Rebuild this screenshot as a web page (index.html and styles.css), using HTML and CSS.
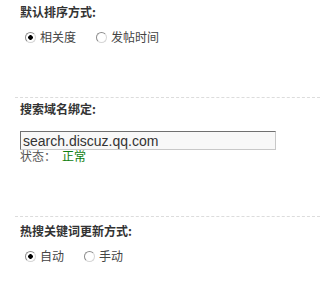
FILE: index.html
```html
<!DOCTYPE html>
<html lang="zh-CN">
<head>
<meta charset="utf-8">
<title>搜索设置</title>
<link rel="stylesheet" href="styles.css">
</head>
<body>
<div class="panel">
  <div class="section section-first">
    <h3 class="title">默认排序方式:</h3>
    <div class="options">
      <label class="opt"><input type="radio" class="radio" name="order" checked><span>相关度</span></label>
      <label class="opt"><input type="radio" class="radio" name="order"><span>发帖时间</span></label>
    </div>
  </div>
  <div class="section section-domain">
    <h3 class="title">搜索域名绑定:</h3>
    <input type="text" class="domain" value="search.discuz.qq.com">
    <div class="status">状态：<span class="ok">正常</span></div>
  </div>
  <div class="section section-last">
    <h3 class="title">热搜关键词更新方式:</h3>
    <div class="options">
      <label class="opt"><input type="radio" class="radio" name="upd" checked><span>自动</span></label>
      <label class="opt"><input type="radio" class="radio" name="upd"><span>手动</span></label>
    </div>
  </div>
</div>
</body>
</html>
```
FILE: styles.css
```css
html, body {
  margin: 0;
  padding: 0;
  background: #fff;
}
body {
  font-family: "Noto Sans CJK SC", "Noto Sans", sans-serif;
  font-size: 12px;
  color: #444;
}
.panel {
  padding-left: 15px;
}
.section {
  border-top: 1px dashed #dcdcdc;
}
.section-first {
  border-top: none;
  padding: 3px 0 51px;
}
.section-domain {
  padding: 2px 0 54px;
}
.section-last {
  padding: 5px 0 20px;
}
.title {
  margin: 0;
  padding-left: 5px;
  font-size: 12px;
  line-height: 18px;
  font-weight: bold;
  color: #333;
}
.options {
  display: flex;
  gap: 20px;
  margin-top: 7px;
  padding-left: 10px;
  line-height: 18px;
}
.opt {
  display: flex;
  align-items: center;
  gap: 4px;
}
.radio {
  appearance: none;
  -webkit-appearance: none;
  box-sizing: border-box;
  width: 11px;
  height: 11px;
  margin: 0;
  border-radius: 50%;
  border: 1px solid;
  border-color: #8c8c8c #d6d6d6 #d6d6d6 #8c8c8c;
  background: #fff;
}
.radio:checked {
  background: radial-gradient(circle, #000 0 2px, #fff 2.6px);
}
.domain {
  display: block;
  box-sizing: border-box;
  width: 256px;
  height: 19px;
  margin: 13px 0 0 5px;
  padding: 0 2px;
  border: 1px solid;
  border-color: #707070 #c8c8c8 #c8c8c8 #707070;
  background: #f8f8f8;
  font-family: "Liberation Sans", Arial, sans-serif;
  font-size: 14px;
  color: #333;
  outline: none;
}
.status {
  padding-left: 5px;
  line-height: 12px;
  color: #555;
}
.ok {
  margin-left: 6px;
  color: #108010;
}
```
